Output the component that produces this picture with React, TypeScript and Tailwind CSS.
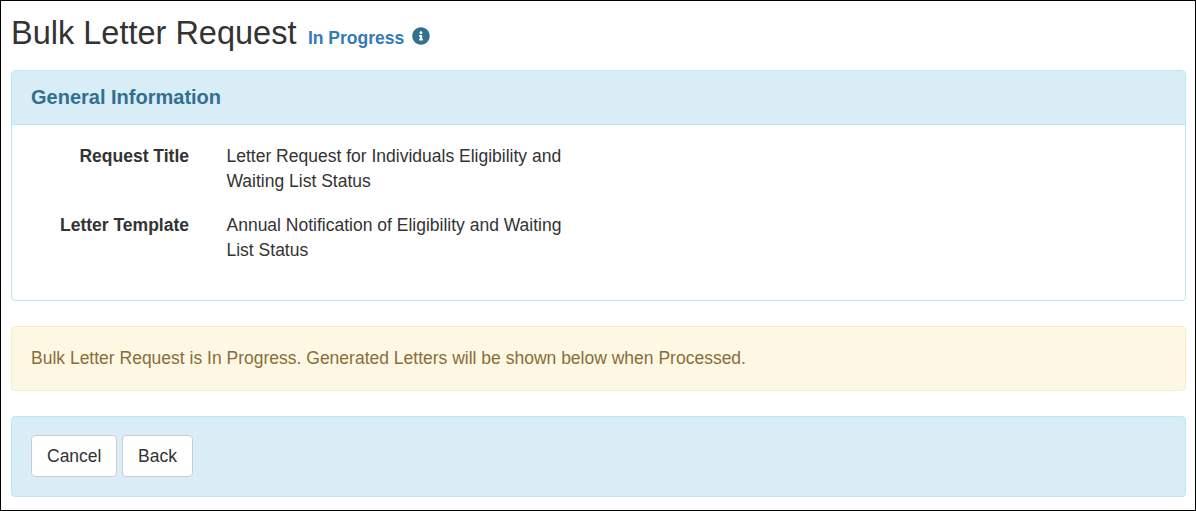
import { FaInfoCircle } from "react-icons/fa";

export default function App() {
  return (
    <div className="w-[1196px] h-[511px] border border-black bg-white pt-[10px] pl-[10px] pr-[9px] font-['Liberation_Sans',Arial,sans-serif] text-[17.5px] text-[#333] overflow-hidden">
      <div className="flex items-baseline h-[44px]">
        <h1 className="text-[32.5px] leading-[44px] font-normal">Bulk Letter Request</h1>
        <span className="ml-[11.5px] text-[17.5px] font-bold text-[#337ab7]">In Progress</span>
        <FaInfoCircle className="ml-[8px] w-[18px] h-[18px] text-[#31708f] self-center mt-[5px]" />
      </div>

      <div className="mt-[15px] h-[231px] rounded-[4px] border border-[#bce8f1]">
        <div className="h-[54px] bg-[#d9edf7] border-b border-[#bce8f1] rounded-t-[3px] flex items-center px-[19px] pb-[2px]">
          <h2 className="text-[20px] font-bold text-[#31708f]">General Information</h2>
        </div>
        <div className="pt-[19px] flex flex-col gap-[19px]">
          <div className="flex leading-[25px]">
            <div className="w-[177px] text-right font-bold">Request Title</div>
            <div className="ml-[37.5px] w-[350px]">Letter Request for Individuals Eligibility and Waiting List Status</div>
          </div>
          <div className="flex leading-[25px]">
            <div className="w-[177px] text-right font-bold">Letter Template</div>
            <div className="ml-[37.5px] w-[350px]">Annual Notification of Eligibility and Waiting List Status</div>
          </div>
        </div>
      </div>

      <div className="mt-[25px] h-[65px] rounded-[4px] border border-[#faebcc] bg-[#fcf8e3] flex items-center px-[19px] text-[#8a6d3b]">
        Bulk Letter Request is In Progress. Generated Letters will be shown below when Processed.
      </div>

      <div className="mt-[25px] h-[81px] rounded-[4px] border border-[#bce8f1] bg-[#d9edf7] flex items-center gap-[5px] px-[19px] pb-[2px]">
        <button className="h-[42px] px-[15px] pt-[1px] rounded-[4px] border border-[#ccc] bg-white text-[#333]">Cancel</button>
        <button className="h-[42px] pl-[14.5px] pr-[15.5px] pt-[1px] rounded-[4px] border border-[#ccc] bg-white text-[#333]">Back</button>
      </div>
    </div>
  );
}
